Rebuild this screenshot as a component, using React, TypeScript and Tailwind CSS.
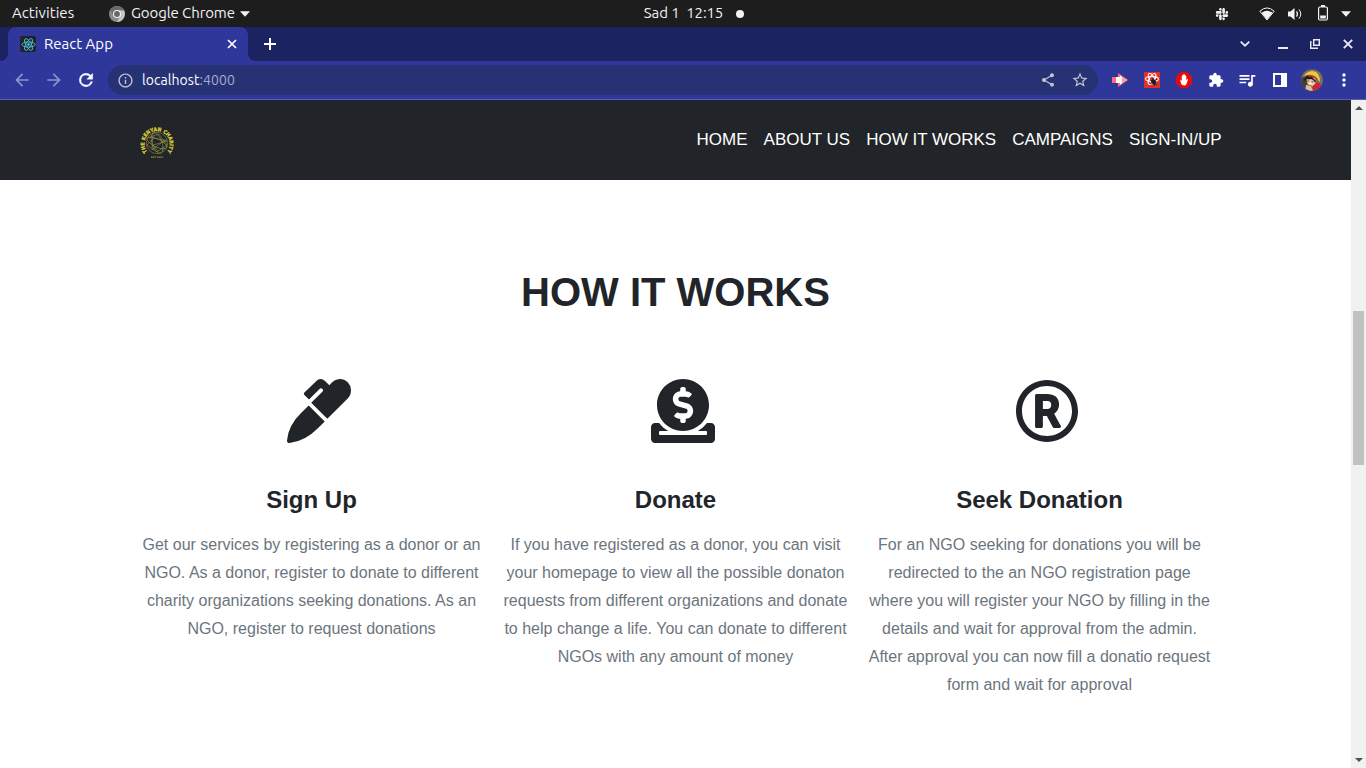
import React from "react";
import { FaDonate, FaRegRegistered, FaSlack } from "react-icons/fa";
import { MdArrowBack, MdArrowForward, MdInfoOutline, MdShare, MdStarOutline, MdExtension, MdQueueMusic, MdMoreVert } from "react-icons/md";

const navItems = ["HOME", "ABOUT US", "HOW IT WORKS", "CAMPAIGNS", "SIGN-IN/UP"];

function PenIcon({ className }: { className?: string }) {
  return (
    <svg viewBox="0 0 64 64" className={className} fill="currentColor">
      <path d="M42.3 6.3C46 2 49 0 52.8 0A11.2 11.2 0 0 1 64 11.4Q64 16 60.7 19.4L40.3 39.8 24.2 23.8 35.6 12.4Q36.6 11.3 35.6 10.2L34.9 9.5Q33.9 8.7 32.8 9.7L22 20.5 17.4 16Q16.2 14.8 17.4 13.5L30.2 1.2Q34.4-1.5 38 2Z" />
      <path d="M21.7 26.6 37.7 42.4 30.6 49.4Q18.5 61.8 2.6 64 0 64 0 61.4 1.5 46 14.3 33.8Z" />
    </svg>
  );
}

const steps = [
  {
    title: "Sign Up",
    Icon: PenIcon,
    lines: [
      "Get our services by registering as a donor or an",
      "NGO. As a donor, register to donate to different",
      "charity organizations seeking donations. As an",
      "NGO, register to request donations",
    ],
  },
  {
    title: "Donate",
    Icon: FaDonate,
    lines: [
      "If you have registered as a donor, you can visit",
      "your homepage to view all the possible donaton",
      "requests from different organizations and donate",
      "to help change a life. You can donate to different",
      "NGOs with any amount of money",
    ],
  },
  {
    title: "Seek Donation",
    Icon: FaRegRegistered,
    lines: [
      "For an NGO seeking for donations you will be",
      "redirected to the an NGO registration page",
      "where you will register your NGO by filling in the",
      "details and wait for approval from the admin.",
      "After approval you can now fill a donatio request",
      "form and wait for approval",
    ],
  },
];

function ReactAtom({ className, stroke, width = 1.6 }: { className: string; stroke: string; width?: number }) {
  return (
    <svg viewBox="0 0 24 24" className={className} fill="none" stroke={stroke} strokeWidth={width}>
      <ellipse cx="12" cy="12" rx="10.5" ry="4.2" />
      <ellipse cx="12" cy="12" rx="10.5" ry="4.2" transform="rotate(60 12 12)" />
      <ellipse cx="12" cy="12" rx="10.5" ry="4.2" transform="rotate(120 12 12)" />
      <circle cx="12" cy="12" r="1.6" fill={stroke} />
    </svg>
  );
}

function SystemBar() {
  return (
    <div className="grid h-[27px] grid-cols-[1fr_auto_1fr] items-center bg-[#1d1d1d] text-[15px] leading-[25px] text-[#f2f2f2]">
      <div className="flex items-center pl-3">
        <span className="w-[97px] pb-0.5 tracking-[0.08px]">Activities</span>
        <svg viewBox="0 0 16 16" className="mr-1.5 size-4">
          <circle cx="8" cy="8" r="8" fill="#8a8a8a" />
          <path d="M8 4.3h7A8 8 0 0 1 8 16l3.2-6Z" fill="#c4c4c4" />
          <path d="M1.2 4A8 8 0 0 1 15 4.3H8L4.8 9.8Z" fill="#6b6b6b" />
          <circle cx="8" cy="8" r="4" fill="#f3f3f3" />
          <circle cx="8" cy="8" r="2.9" fill="#666" />
        </svg>
        <span className="w-[104px] whitespace-nowrap pb-0.5 tracking-[-0.1px]">Google Chrome</span>
        <svg viewBox="0 0 10 6" className="ml-[5px] h-[6px] w-[10px]"><path d="M0 .3h10L5 5.7z" fill="#f2f2f2" /></svg>
      </div>
      <div className="flex items-center whitespace-pre pl-[22px]">
        <span className="pb-0.5 tracking-[-0.1px]">Sad 1  12:15</span>
        <span className="ml-[13px] size-2 rounded-full bg-[#f2f2f2]" />
      </div>
      <div className="flex items-center justify-end pr-[15px]">
        <FaSlack className="mr-[30px] size-[14px]" />
        <svg viewBox="0 0 16 14" className="mr-3 h-[14px] w-4">
          <path d="M.8 4.2Q8-2.3 15.2 4.2L8 13Z" fill="none" stroke="#f2f2f2" strokeWidth="1" />
          <path d="M2.6 5.8Q8 1.6 13.4 5.8L8 12.8Z" fill="#f2f2f2" />
        </svg>
        <svg viewBox="0 0 16 14" className="mr-[15px] h-[14px] w-4" fill="none" stroke="#f2f2f2">
          <path d="M1 4.5h2.5L7.5 1v12l-4-3.5H1z" fill="#f2f2f2" stroke="none" />
          <path d="M9.5 4.3q2 2.7 0 5.4" strokeWidth="1.2" />
          <path d="M12 2.4q3.6 4.6 0 9.2" strokeWidth="1" />
        </svg>
        <svg viewBox="0 0 10 16" className="mb-0.5 mr-[13px] h-4 w-[10px]" fill="none">
          <rect x=".6" y="2" width="8.8" height="13" rx="1.2" stroke="#f2f2f2" strokeWidth="1.2" />
          <path d="M3 0h4v2H3zM2.2 10.5h5.6V13.5H2.2z" fill="#f2f2f2" />
        </svg>
        <svg viewBox="0 0 10 6" className="h-[6px] w-[10px]"><path d="M0 .3h10L5 5.7z" fill="#f2f2f2" /></svg>
      </div>
    </div>
  );
}

function TabStrip() {
  return (
    <div className="flex h-[34px] items-stretch bg-[#1b2360] text-white">
      <div className="flex w-2 items-end bg-[#2f379b]"><span className="h-full w-full rounded-br-lg bg-[#1b2360]" /></div>
      <div className="flex w-60 items-center rounded-t-lg bg-[#2f379b] pl-3 pr-[11px]">
        <span className="flex size-4 items-center justify-center rounded-[2px] bg-[#20232a]">
          <ReactAtom className="size-[15px]" stroke="#53c1de" width={1.4} />
        </span>
        <span className="ml-2 flex-1 text-[15px]">React App</span>
        <svg viewBox="0 0 10 10" className="size-[10px]" stroke="white" strokeWidth="1.7"><path d="m1 1 8 8M9 1 1 9" /></svg>
      </div>
      <div className="flex w-2 bg-[#2f379b]"><span className="h-full w-full rounded-bl-lg bg-[#1b2360]" /></div>
      <div className="flex flex-1 items-center pl-2">
        <svg viewBox="0 0 12 12" className="size-3" stroke="white" strokeWidth="2"><path d="M6 0v12M0 6h12" /></svg>
      </div>
      <div className="flex items-center pr-[13px]">
        <svg viewBox="0 0 10 6" className="mr-7 h-[6px] w-[10px]" fill="none" stroke="#e8eaf6" strokeWidth="1.8"><path d="m.7.7 4.3 4 4.3-4" /></svg>
        <svg viewBox="0 0 10 10" className="mr-[22px] size-[10px]"><path d="M0 8h10v2H0z" fill="#e8eaf6" /></svg>
        <svg viewBox="0 0 10 10" className="mr-[23px] size-[10px]" fill="none" stroke="#e8eaf6"><path d="M3.7.7h5.6v5.6H3.7z" strokeWidth="1.5" /><path d="M.7 2v7.3H8" strokeWidth="1.5" /></svg>
        <svg viewBox="0 0 10 10" className="size-[10px]" stroke="#e8eaf6" strokeWidth="1.9"><path d="m.8.8 8.4 8.4M9.2.8.8 9.2" /></svg>
      </div>
    </div>
  );
}

function Extensions() {
  return (
    <div className="flex flex-1 items-center pl-[14px] text-white">
      <svg viewBox="0 0 16 14" className="mr-4 h-[14px] w-4">
        <path d="M0 4h6V0l10 7-10 7v-4H0z" fill="#f4707c" />
        <path d="M4 4h4V2l5 5-5 5v-2H4z" fill="#fff" />
        <path d="M10 3.5 15.5 7 10 10.5z" fill="#ff9ca2" />
      </svg>
      <span className="mr-4 grid size-4 place-items-center bg-[#df302d]">
        <svg viewBox="0 0 16 16" className="size-4" fill="none">
          <g stroke="#fff" strokeWidth="1.1">
            <ellipse cx="8" cy="7" rx="6.5" ry="2.5" />
            <ellipse cx="8" cy="7" rx="6" ry="2.6" transform="rotate(60 8 7)" />
            <ellipse cx="8" cy="7" rx="6" ry="2.6" transform="rotate(120 8 7)" />
          </g>
          <ellipse cx="9.8" cy="10" rx="2.3" ry="3.1" fill="#28191b" transform="rotate(-35 9.8 10)" />
          <path d="m6 8 7 5M6 12l7-5M9 6l1 8" stroke="#28191b" strokeWidth=".9" />
        </svg>
      </span>
      <svg viewBox="0 0 16 16" className="mr-4 size-4">
        <path d="M4.7 0h6.6L16 4.7v6.6L11.3 16H4.7L0 11.3V4.7z" fill="#ea0909" />
        <path d="M5.8 9V4.2q0-1.2 1-.8V3q.2-1 1.2-.5 1-.5 1.2.5v.6q1-.3 1.1.8v3.8l1-1.2q1 0 .7.8l-1.6 4.2q-.5 1.5-2.2 1.5-2.5 0-3.1-2L4.1 8q.5-1 1.7 1Z" fill="#fff" />
      </svg>
      <MdExtension className="mr-[13px] size-4" />
      <MdQueueMusic className="mr-4 size-5" />
      <svg viewBox="0 0 14 14" className="mr-[14px] size-[14px]"><path d="M0 0h14v14H0zM2 2v10h6V2z" fill="#fff" fillRule="evenodd" /></svg>
      <svg viewBox="0 0 22 22" className="mr-[11px] size-[22px]">
        <defs><clipPath id="avatar"><circle cx="11" cy="11" r="10.8" /></clipPath></defs>
        <g clipPath="url(#avatar)">
          <path d="M0 0h22v22H0z" fill="#79725e" />
          <path d="M0 9 6 7v15H0z" fill="#423d35" />
          <path d="M3 7Q6 2 12 2q7 1 7 11l-2-2-4-4-7-1Z" fill="#edc83f" />
          <path d="M5 6.5Q11 4 16.5 9.5v2l-5-3.5-6 .5Z" fill="#b1342e" />
          <path d="M5 9 9 7.5l5 2 1.5 4-3.5 3.5-5-2Z" fill="#f1c6a0" />
          <path d="m3 10 3-3 5 1 4 4-.5 2-2.5-3-2-1-2 .5-2-.5-2 2z" fill="#211d1d" />
          <path d="m6.5 11.8 1.6.4M10.6 12.7l1.6.2" stroke="#211d1d" strokeWidth=".8" />
          <path d="m7 13.5 4 1-1 1.3q-2 .3-3-2.3Z" fill="#fff" />
          <path d="m12 17 4-4 4 2v8h-9Z" fill="#c6283a" />
          <path d="m5 16 5 1 2 5H4Z" fill="#e7ba91" />
        </g>
      </svg>
      <MdMoreVert className="size-5" />
    </div>
  );
}

function Toolbar() {
  return (
    <div className="flex h-[39px] items-center border-b border-[#5860b4] bg-[#2f379b] pl-3 text-white">
      <MdArrowBack className="mr-3 size-5 text-[#8e93cb]" />
      <MdArrowForward className="mr-3 size-5 text-[#8e93cb]" />
      <svg viewBox="0 0 24 24" className="mr-3 size-5" fill="currentColor" stroke="currentColor" strokeWidth=".5">
        <path d="M17.65 6.35A7.96 7.96 0 0 0 12 4a8 8 0 1 0 7.73 10h-2.08A6 6 0 1 1 12 6c1.66 0 3.14.69 4.22 1.78L13 11h7V4z" />
      </svg>
      <div className="flex h-[30px] w-[990px] items-center rounded-full bg-[#263274] pl-[9px] pr-[9px]">
        <MdInfoOutline className="mr-2 size-[17px] text-[#bdc2d8]" />
        <span className="flex-1 text-[14px] tracking-[0.06px]">localhost<span className="text-[#a4accc]">:4000</span></span>
        <MdShare className="mr-[15px] size-4 text-[#c0c4d6]" />
        <MdStarOutline className="size-[18px] text-[#c0c4d6]" />
      </div>
      <Extensions />
    </div>
  );
}

function CharityLogo() {
  return (
    <svg viewBox="0 0 36 36" className="size-9">
      <defs><path id="logo-ring" d="M8.3 28.8A12.6 12.6 0 1 1 27.7 28.8" /></defs>
      <text fill="#d9cd35" stroke="#d9cd35" strokeWidth=".3" fontSize="5.2" fontWeight="700" fontFamily="DejaVu Sans">
        <textPath href="#logo-ring" textLength="56.5" lengthAdjust="spacingAndGlyphs">THE KENYAN CHARITY</textPath>
      </text>
      <g fill="none" stroke="#aaa64b" strokeWidth=".5">
        <circle cx="18" cy="20" r="10.7" />
        <ellipse cx="18" cy="20" rx="5" ry="10.7" transform="rotate(-20 18 20)" />
        <ellipse cx="18" cy="20" rx="10.7" ry="4" transform="rotate(25 18 20)" />
        <path d="m9 15 11-4 8 11-10 7-10-7 7-7 13 3-14 4 5 6M14 10l-1 17 14-11" />
      </g>
      <text x="18" y="34.6" textAnchor="middle" fontSize="2.3" fontWeight="700" fontFamily="DejaVu Sans" fill="#aaa33c">EST 2022</text>
    </svg>
  );
}

function Page() {
  return (
    <main className="flex min-w-0 flex-1 flex-col bg-white font-['Liberation_Sans',Arial,sans-serif] text-[#212529]">
      <nav className="flex h-20 shrink-0 items-center justify-between bg-[#212529] pl-[139px] pr-[129.5px] text-[17px] text-white">
        <div className="pt-px"><CharityLogo /></div>
        <div className="flex gap-4 pb-px">{navItems.map((item) => <a key={item}>{item}</a>)}</div>
      </nav>
      <h2 className="mt-[88px] text-center text-[40px] font-bold leading-[48px]">HOW IT WORKS</h2>
      <div className="mx-auto mt-[63px] grid w-[1092px] grid-cols-3">
        {steps.map(({ title, Icon, lines }) => (
          <section key={title} className="flex flex-col items-center text-center">
            <Icon className="ml-[15px] size-16" />
            <h4 className="mt-[42px] text-[24px] font-bold leading-[29px]">{title}</h4>
            <p className="mt-[17px] whitespace-nowrap text-[16px] leading-7 text-[#6c757d]">
              {lines.map((line) => <span key={line} className="block">{line}</span>)}
            </p>
          </section>
        ))}
      </div>
    </main>
  );
}

function Scrollbar() {
  return (
    <div className="flex w-[15px] flex-col items-center bg-[#f1f1f1]">
      <svg viewBox="0 0 8 4" className="mt-[6px] h-1 w-2"><path d="M4 0 8 4H0z" fill="#505050" /></svg>
      <div className="mt-[201px] h-[154px] w-[11px] bg-[#c1c1c1]" />
      <svg viewBox="0 0 8 4" className="mb-[6px] mt-auto h-1 w-2"><path d="M0 0h8L4 4z" fill="#505050" /></svg>
    </div>
  );
}

export default function App() {
  return (
    <div className="flex h-[768px] w-[1366px] flex-col overflow-hidden font-['Ubuntu','Noto_Sans',sans-serif]">
      <SystemBar />
      <TabStrip />
      <Toolbar />
      <div className="flex min-h-0 flex-1"><Page /><Scrollbar /></div>
    </div>
  );
}
